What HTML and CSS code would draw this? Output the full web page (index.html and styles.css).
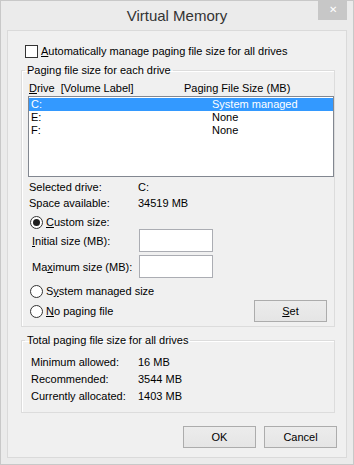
FILE: index.html
```html
<!DOCTYPE html>
<html>
<head>
  <meta name="viewport" content="width=device-width, initial-scale=1">
  <link rel="stylesheet" href="styles.css">
</head>
<body>

  <div class="window">
    <div class="titlebar">
      <span></span>
      <span class="title">Virtual Memory</span>
      <span class="closeBtn">&#x2715;</span>
    </div>

    <div class="client">
      <label class="checkRow">
        <span class="checkBox"></span>
        <span><u>A</u>utomatically manage paging file size for all drives</span>
      </label>

      <fieldset class="group groupDrives">
        <legend>Paging file size for each drive</legend>

        <div class="listHeader">
          <span><u>D</u>rive&nbsp; [Volume Label]</span>
          <span>Paging File Size (MB)</span>
        </div>
        <div class="listBox">
          <div class="listRow selected"><span>C:</span><span>System managed</span></div>
          <div class="listRow"><span>E:</span><span>None</span></div>
          <div class="listRow"><span>F:</span><span>None</span></div>
        </div>

        <div class="infoGrid">
          <span>Selected drive:</span><span>C:</span>
          <span>Space available:</span><span>34519 MB</span>
        </div>

        <div class="radioRow radioCustom">
          <span class="radio checked"></span>
          <span><u>C</u>ustom size:</span>
        </div>
        <div class="sizeRow">
          <span class="sizeLabel"><u>I</u>nitial size (MB):</span>
          <span class="textBox"></span>
        </div>
        <div class="sizeRow sizeMax">
          <span class="sizeLabel">Ma<u>x</u>imum size (MB):</span>
          <span class="textBox"></span>
        </div>
        <div class="radioRow radioSystem">
          <span class="radio"></span>
          <span>S<u>y</u>stem managed size</span>
        </div>
        <div class="lastRow">
          <div class="radioRow">
            <span class="radio"></span>
            <span><u>N</u>o paging file</span>
          </div>
          <button class="winButton setButton"><u>S</u>et</button>
        </div>
      </fieldset>

      <fieldset class="group groupTotal">
        <legend>Total paging file size for all drives</legend>
        <div class="totalGrid">
          <span>Minimum allowed:</span><span>16 MB</span>
          <span>Recommended:</span><span>3544 MB</span>
          <span>Currently allocated:</span><span>1403 MB</span>
        </div>
      </fieldset>

      <div class="dialogButtons">
        <button class="winButton">OK</button>
        <button class="winButton">Cancel</button>
      </div>
    </div>
  </div>

</body>
</html>
```

FILE: styles.css
```css
html, body {
  margin: 0;
  background-color: rgb(235, 235, 235);
}

body {
  font-family: "Liberation Sans", Arial, sans-serif;
  font-size: 11px;
  color: #000;
  white-space: nowrap;
}

u {
  text-decoration: underline;
  text-underline-offset: 1px;
}

.window {
  width: 354px;
  height: 465px;
  box-sizing: border-box;
  background-color: rgb(235, 235, 235);
  border: 1px solid rgb(200, 200, 200);
  padding: 0 6px 6px 6px;
}

.titlebar {
  height: 29px;
  display: grid;
  grid-template-columns: 1fr auto 1fr;
  align-items: start;
}

.title {
  font-size: 15px;
  color: rgb(51, 51, 51);
  line-height: 18px;
  margin-top: 6px;
}

.closeBtn {
  justify-self: end;
  width: 29px;
  height: 20px;
  margin-top: -1px;
  background-color: rgb(199, 199, 199);
  color: white;
  font-size: 10px;
  line-height: 20px;
  text-align: center;
}

.client {
  height: 428px;
  box-sizing: border-box;
  background-color: rgb(240, 240, 240);
  border: 1px solid rgb(218, 218, 218);
  padding: 12px 11px 0 13px;
}

.checkRow {
  display: flex;
  align-items: center;
  height: 16px;
  margin-left: 4px;
  gap: 3px;
}

.checkBox {
  width: 11px;
  height: 11px;
  border: 1px solid rgb(51, 51, 51);
  background: white;
}

.group {
  margin: 3px 0 0 0;
  padding: 0 0 0 6px;
  border: 1px solid rgb(220, 220, 220);
  box-shadow: inset 1px 1px 0 white;
  min-width: 0;
}

.group legend {
  padding: 0 2px;
  margin-left: -3px;
  line-height: 16px;
}

.groupDrives {
  padding-bottom: 4px;
}

.listHeader {
  display: flex;
  height: 14px;
  line-height: 14px;
  margin-top: 3px;
  padding-left: 1px;
}

.listHeader span:first-child {
  width: 155px;
}

.listBox {
  margin-top: 1px;
  height: 81px;
  box-sizing: border-box;
  background: white;
  border: 1px solid rgb(130, 135, 144);
  padding-top: 1px;
}

.listRow {
  display: flex;
  height: 13px;
  line-height: 13px;
  padding-left: 2px;
}

.listRow span:first-child {
  width: 181px;
}

.listRow.selected {
  background-color: rgb(51, 153, 255);
  color: white;
}

.infoGrid {
  display: grid;
  grid-template-columns: 109px auto;
  line-height: 16px;
  margin-top: 2px;
  padding-left: 1px;
}

.radioRow {
  display: flex;
  align-items: center;
  gap: 3px;
  height: 16px;
  padding-left: 2px;
}

.radioCustom {
  height: 14px;
  margin-top: 4px;
}

.radio {
  width: 11px;
  height: 11px;
  border: 1px solid rgb(51, 51, 51);
  border-radius: 50%;
  background: white;
  display: flex;
  align-items: center;
  justify-content: center;
}

.radio.checked::after {
  content: "";
  width: 7px;
  height: 7px;
  border-radius: 50%;
  background: rgb(30, 30, 30);
}

.sizeRow {
  display: flex;
  align-items: center;
  height: 23px;
  padding-left: 4px;
}

.sizeLabel {
  width: 107px;
  flex-shrink: 0;
}

.sizeMax {
  margin-top: 3px;
}

.textBox {
  width: 74px;
  height: 23px;
  box-sizing: border-box;
  background: white;
  border: 1px solid rgb(171, 173, 179);
}

.radioSystem {
  margin-top: 5px;
}

.lastRow {
  display: flex;
  justify-content: space-between;
  align-items: center;
  margin-top: 1px;
  padding-right: 7px;
}

.winButton {
  font-family: "Liberation Sans", Arial, sans-serif;
  font-size: 11px;
  color: #000;
  width: 73px;
  height: 22px;
  padding: 0;
  background: linear-gradient(rgb(236, 236, 236), rgb(229, 229, 229));
  border: 1px solid rgb(172, 172, 172);
}

.groupTotal {
  margin-top: 5px;
  padding-bottom: 8px;
}

.totalGrid {
  display: grid;
  grid-template-columns: 107px auto;
  grid-auto-rows: 17px;
  align-items: center;
  margin-top: 5px;
  padding-left: 3px;
}

.dialogButtons {
  display: flex;
  justify-content: flex-end;
  gap: 8px;
  margin-top: 13px;
  margin-right: -2px;
}
```
